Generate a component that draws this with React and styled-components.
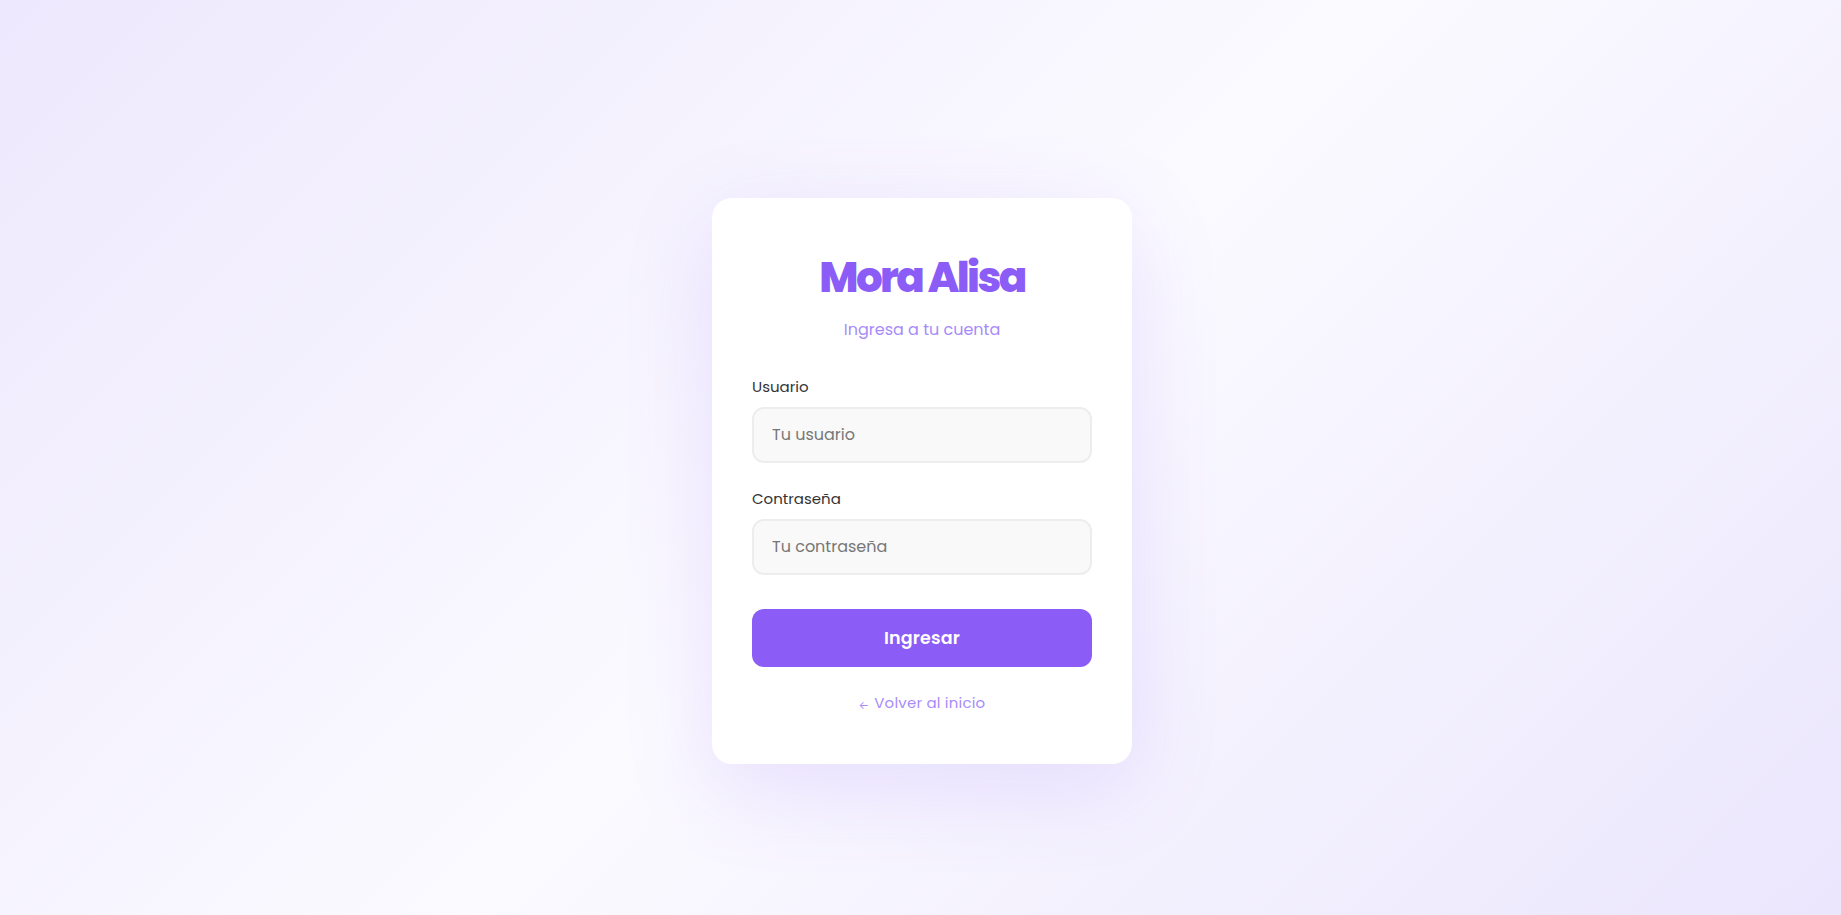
import React from "react";
import styled, { createGlobalStyle } from "styled-components";

const GlobalStyle = createGlobalStyle`
  * { box-sizing: border-box; }
  html, body { margin: 0; padding: 0; }
  body {
    font-family: "Poppins", "Inter", "Noto Sans", sans-serif;
    background: linear-gradient(135deg, #ede8fd 0%, #fbfaff 50%, #ebe6fd 100%);
    min-height: 100vh;
  }
`;

const Page = styled.main`
  min-height: 100vh;
  display: flex;
  align-items: center;
  justify-content: center;
  padding: 46px 0 0 3px;
`;

const Card = styled.section`
  width: 420px;
  background: #ffffff;
  border-radius: 20px;
  padding: 55px 40px 50px;
  box-shadow: 0 24px 90px rgba(139, 92, 246, 0.16);
  display: flex;
  flex-direction: column;
`;

const Title = styled.h1`
  margin: 0;
  text-align: center;
  font-size: 42px;
  line-height: 50px;
  font-weight: 800;
  letter-spacing: -2.6px;
  color: #8b5cf6;
`;

const Subtitle = styled.p`
  margin: 16px 0 36px;
  text-align: center;
  font-size: 16px;
  line-height: 22px;
  color: #a78bfa;
`;

const Field = styled.div`
  display: flex;
  flex-direction: column;
  margin-bottom: ${(p) => p.$gap}px;
`;

const Label = styled.label`
  font-size: 15px;
  line-height: 20px;
  font-weight: 400;
  color: #333333;
  margin-bottom: 10px;
`;

const Input = styled.input`
  height: 56px;
  width: 100%;
  border: 2px solid #ededed;
  border-radius: 12px;
  background: #f9f9f9;
  padding: 0 18px;
  font-family: inherit;
  font-size: 16px;
  color: #333;
  outline: none;
  &::placeholder { color: #777777; }
`;

const Button = styled.button`
  height: 58px;
  width: 100%;
  border: none;
  border-radius: 12px;
  background: #8b5cf6;
  color: #ffffff;
  font-family: inherit;
  font-size: 17.5px;
  font-weight: 600;
  letter-spacing: 0.2px;
  cursor: pointer;
`;

const BackLink = styled.a`
  margin-top: 26px;
  text-align: center;
  font-size: 15px;
  line-height: 20px;
  color: #a78bfa;
  text-decoration: none;
  letter-spacing: 0.2px;
`;

const Arrow = styled.span`
  font-size: 11px;
  margin-right: 5px;
  position: relative;
  top: 1px;
`;

export default function App() {
  return (
    <>
      <GlobalStyle />
      <Page>
        <Card>
          <Title>Mora Alisa</Title>
          <Subtitle>Ingresa a tu cuenta</Subtitle>
          <Field $gap={26}>
            <Label htmlFor="user">Usuario</Label>
            <Input id="user" type="text" placeholder="Tu usuario" />
          </Field>
          <Field $gap={34}>
            <Label htmlFor="pass">Contraseña</Label>
            <Input id="pass" type="password" placeholder="Tu contraseña" />
          </Field>
          <Button type="button">Ingresar</Button>
          <BackLink href="#">
            <Arrow>←</Arrow>Volver al inicio
          </BackLink>
        </Card>
      </Page>
    </>
  );
}
